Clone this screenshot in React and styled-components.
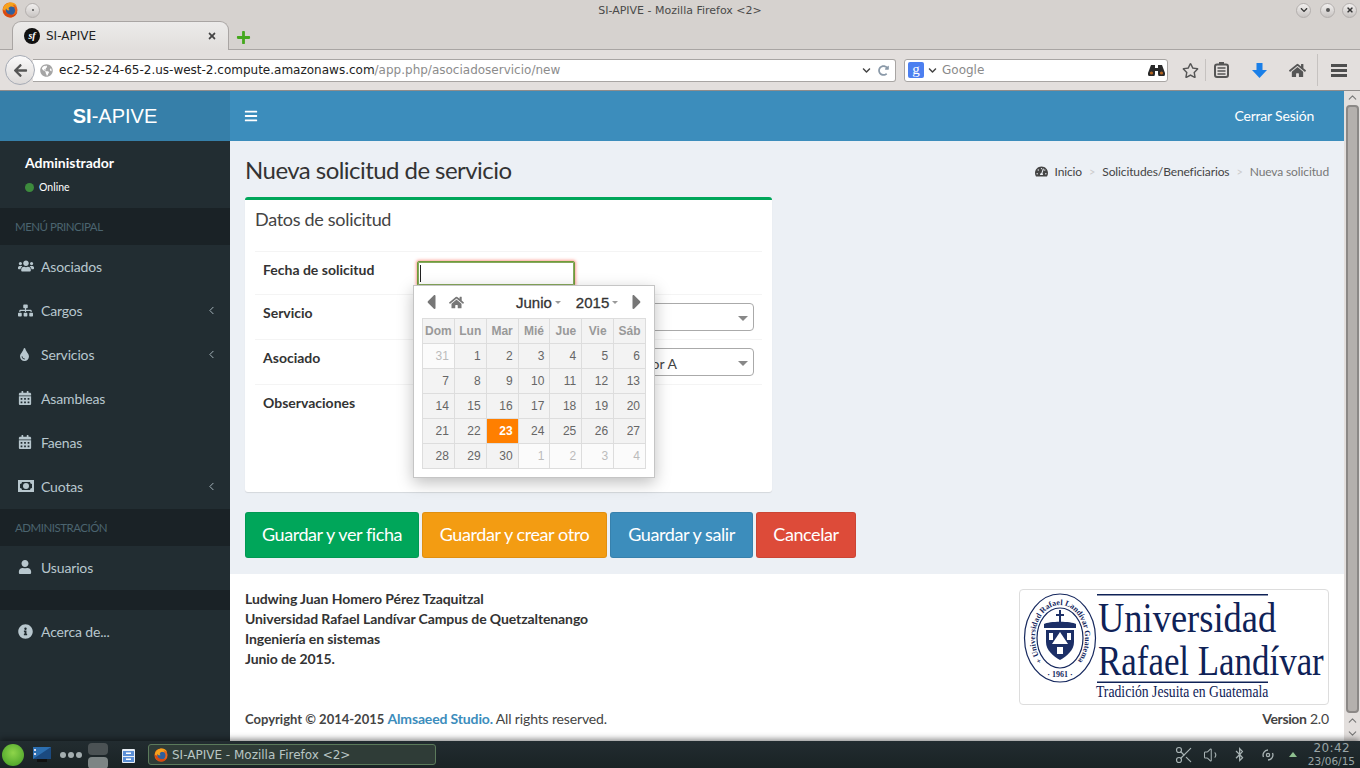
import React from 'react'
import styled, { createGlobalStyle } from 'styled-components'
import {
  FaUsers, FaSitemap, FaTint, FaCalendarAlt, FaUser, FaInfoCircle,
  FaTachometerAlt, FaBars, FaHome, FaCaretLeft, FaCaretRight,
  FaRegStar, FaArrowLeft, FaChevronDown, FaRedoAlt, FaGlobeAmericas, FaPlus, FaTimes,
  FaBluetoothB,
} from 'react-icons/fa'
import { ChevronLeft, ChevronUp, ChevronDown, Scissors, Volume1 } from 'lucide-react'

const Global = createGlobalStyle`
  html, body { margin: 0; padding: 0; width: 1360px; height: 768px; overflow: hidden; }
  body { font-family: Lato, "Noto Sans", sans-serif; font-size: 14px; color: #333; }
  * { box-sizing: border-box; }
`

const Screen = styled.div`
  width: 1360px;
  height: 768px;
  display: flex;
  flex-direction: column;
  background: #d6d2cf;
`

/* ---------- browser chrome ---------- */
const TitleBar = styled.div`
  height: 20px;
  display: flex;
  align-items: center;
  padding: 0 0 0 2px;
  font-family: "DejaVu Sans", sans-serif;
  font-size: 11px;
  color: #4a4a4a;
`
const TitleText = styled.div`
  flex: 1;
  text-align: center;
  padding-left: 24px;
`
const RoundKnob = styled.div`
  width: 15px;
  height: 15px;
  margin-left: ${({ $ml }) => $ml || 0}px;
  margin-right: ${({ $mr }) => $mr || 0}px;
  border-radius: 50%;
  background: linear-gradient(#f1efee, #c8c4c2);
  border: 1px solid #b3afad;
  display: flex;
  align-items: center;
  justify-content: center;
  color: #333;
  font-size: 8px;
  flex: none;
`
const Dot = styled.span`
  width: ${({ $s }) => $s || 2}px;
  height: ${({ $s }) => $s || 2}px;
  background: #555;
  border-radius: 50%;
`
const TabBar = styled.div`
  height: 30px;
  display: flex;
  align-items: flex-end;
  padding-left: 12px;
  border-bottom: 1px solid #a9a5a3;
`
const Tab = styled.div`
  width: 217px;
  height: 29px;
  margin-bottom: -1px;
  display: flex;
  align-items: center;
  padding: 0 11px 0 11px;
  background: linear-gradient(#ecebea, #e1dedc);
  border: 1px solid #a9a5a3;
  border-bottom: none;
  border-radius: 9px 9px 0 0;
  font-family: "DejaVu Sans", sans-serif;
  font-size: 12px;
  color: #222;
`
const Favicon = styled.span`
  width: 16px;
  height: 16px;
  border-radius: 50%;
  background: #111;
  color: #fff;
  font-family: "Liberation Serif", serif;
  font-style: italic;
  font-weight: 700;
  font-size: 10px;
  line-height: 15px;
  text-align: center;
  margin-right: 6px;
  flex: none;
`
const TabLabel = styled.span`
  flex: 1;
`
const NewTab = styled.div`
  margin: 0 0 4px 7px;
  color: #45a81e;
  font-size: 15px;
  display: flex;
`
const NavBar = styled.div`
  height: 41px;
  background: #e3dfdd;
  border-bottom: 1px solid #8f8c8b;
  display: flex;
  align-items: center;
  padding: 0 0 0 5px;
`
const BackButton = styled.div`
  width: 30px;
  height: 30px;
  border-radius: 50%;
  background: linear-gradient(#fbfafa, #dcd9d8);
  border: 1px solid #a6abb5;
  display: flex;
  align-items: center;
  justify-content: center;
  color: #555;
  font-size: 15px;
  margin-right: -2px;
  position: relative;
  z-index: 1;
  flex: none;
`
const UrlBox = styled.div`
  width: 863px;
  height: 23px;
  background: #fff;
  border: 1px solid #a8a5a3;
  border-left: none;
  border-radius: 0 3px 3px 0;
  display: flex;
  align-items: center;
  padding: 0 3px 0 7px;
  font-family: "DejaVu Sans", sans-serif;
  font-size: 12px;
  color: #222;
`
const UrlText = styled.div`
  flex: 1;
  margin-left: 6px;
  white-space: nowrap;
`
const UrlRest = styled.span`
  color: #8c8c8c;
`
const SearchBox = styled.div`
  width: 264px;
  height: 23px;
  margin-left: 8px;
  background: #fff;
  border: 1px solid #a8a5a3;
  border-radius: 3px;
  display: flex;
  align-items: center;
  padding: 0 2px 0 3px;
  font-family: "DejaVu Sans", sans-serif;
  font-size: 12px;
  color: #8a8a8a;
`
const GoogleBadge = styled.span`
  width: 16px;
  height: 16px;
  border-radius: 2px;
  background: #4c7ff0;
  color: #fff;
  font-family: "Liberation Serif", serif;
  font-size: 15px;
  line-height: 14px;
  text-align: center;
  flex: none;
`
const SearchLabel = styled.span`
  flex: 1;
  margin-left: 5px;
`
const ToolIcons = styled.div`
  display: flex;
  align-items: center;
  color: #555;
  height: 100%;
`
const ToolIcon = styled.div`
  width: ${({ $w }) => $w || 38}px;
  margin-left: ${({ $ml }) => $ml || 0}px;
  display: flex;
  justify-content: center;
  font-size: ${({ $size }) => $size || 16}px;
  color: #555;
`
const ToolSep = styled.div`
  width: 1px;
  height: ${({ $h }) => $h || 22}px;
  margin-left: ${({ $ml }) => $ml || 0}px;
  background: #c6c2c0;
`
const MenuLines = styled.div`
  width: 16px;
  height: 13px;
  border-top: 3px solid #4e4e4e;
  border-bottom: 3px solid #4e4e4e;
  position: relative;
  &:after {
    content: '';
    position: absolute;
    left: 0;
    right: 0;
    top: 2px;
    height: 3px;
    background: #4e4e4e;
  }
`

/* ---------- page ---------- */
const Viewport = styled.div`
  height: 650px;
  display: flex;
  background: #fff;
`
const Sidebar = styled.aside`
  width: 230px;
  background: #222d32;
  display: flex;
  flex-direction: column;
  flex: none;
`
const Brand = styled.div`
  height: 50px;
  background: #367fa9;
  color: #fff;
  font-family: "Liberation Sans", sans-serif;
  font-size: 20px;
  line-height: 50px;
  text-align: center;
  b { font-weight: 700; }
`
const UserPanel = styled.div`
  height: 67px;
  padding: 13px 0 0 25px;
  color: #fff;
`
const UserName = styled.div`
  font-weight: 700;
  font-size: 14px;
  line-height: 18px;
`
const UserStatus = styled.div`
  display: flex;
  align-items: center;
  font-size: 10.5px;
  margin-top: 8px;
  line-height: 14px;
`
const StatusDot = styled.span`
  width: 9px;
  height: 9px;
  border-radius: 50%;
  background: #3d8b3d;
  margin-right: 5px;
`
const MenuHeader = styled.div`
  height: ${({ $h }) => $h || 37}px;
  background: #1a2226;
  color: #4b646f;
  font-size: 11.5px;
  letter-spacing: -0.5px;
  line-height: 37px;
  padding-left: 15px;
`
const MenuItem = styled.div`
  height: 44px;
  display: flex;
  align-items: center;
  padding: 0 12px 2px 18px;
  color: #b8c7ce;
  font-size: 14px;
  letter-spacing: -0.15px;
`
const MenuIcon = styled.span`
  width: 23px;
  display: flex;
  font-size: 15px;
  flex: none;
`
const MenuLabel = styled.span`
  flex: 1;
`
const MenuArrow = styled.span`
  display: flex;
`

const Main = styled.main`
  flex: 1;
  display: flex;
  flex-direction: column;
  min-width: 0;
`
const TopBar = styled.header`
  height: 50px;
  background: #3c8dbc;
  color: #fff;
  display: flex;
  align-items: center;
  justify-content: space-between;
  padding: 0 30px 2px 15px;
  font-size: 14px;
  letter-spacing: -0.2px;
  flex: none;
`
const Burger = styled.span`
  display: flex;
  font-size: 14px;
  margin-left: -1px;
  margin-top: 2px;
`
const Content = styled.section`
  height: 433px;
  background: #ecf0f5;
  padding: 14px 15px 0;
  flex: none;
`
const ContentHead = styled.div`
  display: flex;
  align-items: center;
  justify-content: space-between;
  height: 28px;
  margin-bottom: 14px;
`
const PageTitle = styled.h1`
  margin: 0;
  font-size: 24px;
  font-weight: 400;
  letter-spacing: -0.55px;
  color: #333;
`
const Breadcrumb = styled.div`
  display: flex;
  align-items: center;
  font-size: 12px;
  letter-spacing: -0.12px;
  color: #444;
  padding-top: 4px;
`
const CrumbSep = styled.span`
  color: #ccc;
  margin: 0 7px;
  font-size: 11px;
`
const CrumbIcon = styled.span`
  display: flex;
  margin-right: 6px;
  font-size: 13px;
`
const CrumbCurrent = styled.span`
  color: #777;
`
const Card = styled.div`
  width: 527px;
  height: 295px;
  background: #fff;
  border-top: 3px solid #00a65a;
  border-radius: 3px;
  box-shadow: 0 1px 1px rgba(0, 0, 0, 0.1);
  padding: 0 10px;
`
const CardTitle = styled.h3`
  margin: 0;
  height: 51px;
  font-size: 18px;
  font-weight: 400;
  letter-spacing: -0.3px;
  color: #444;
  line-height: 38px;
`
const FormRow = styled.div`
  height: ${({ $h }) => $h}px;
  border-top: 1px solid #f4f4f4;
  display: flex;
  padding-top: 8px;
  position: relative;
`
const FormLabel = styled.label`
  width: 162px;
  padding-left: 8px;
  font-weight: 700;
  font-size: 14px;
  line-height: 20px;
  color: #333;
  flex: none;
`
const DateInput = styled.div`
  width: 158px;
  height: 25px;
  background: #fff;
  border: 1px solid #6f9c3b;
  border-radius: 2px;
  box-shadow: 0 0 3px 1px rgba(255, 70, 50, 0.5), inset 0 0 0 1px #86a85c;
  padding: 3px 2px;
  margin-top: 1px;
`
const Caret = styled.div`
  width: 1px;
  height: 17px;
  background: #222;
`
const FakeSelect = styled.div`
  width: 337px;
  height: 28px;
  border: 1px solid #aaa;
  border-radius: 4px;
  background: #fff;
  display: flex;
  align-items: center;
  justify-content: space-between;
  padding: 2px 5px 0 207px;
  font-size: 14px;
  color: #444;
`
const SelectArrow = styled.span`
  width: 0;
  height: 0;
  border-left: 5px solid transparent;
  border-right: 5px solid transparent;
  border-top: 5px solid #888;
`

/* calendar popup, sits over the form */
const Popup = styled.div`
  position: absolute;
  left: 158px;
  top: 33px;
  width: 242px;
  height: 193px;
  background: #fff;
  border: 1px solid #c5c5c5;
  box-shadow: 0 5px 15px rgba(0, 0, 0, 0.25);
  padding: 0 8px;
  z-index: 2;
  font-family: "Liberation Sans", sans-serif;
`
const PopupHead = styled.div`
  height: 32px;
  display: flex;
  align-items: center;
  color: #777;
`
const HeadIcon = styled.span`
  display: flex;
  font-size: ${({ $size }) => $size || 18}px;
  margin-left: ${({ $ml }) => $ml || 0}px;
`
const HeadPick = styled.span`
  font-size: 15px;
  color: #333;
  -webkit-text-stroke: 0.3px #333;
  margin-left: ${({ $ml }) => $ml}px;
  display: flex;
  align-items: center;
  &:after {
    content: '';
    margin-left: 3px;
    border-left: 3px solid transparent;
    border-right: 3px solid transparent;
    border-top: 3px solid #999;
  }
`
const CalGrid = styled.div`
  display: grid;
  grid-template-columns: repeat(7, 1fr);
  grid-auto-rows: 25px;
  width: 224px;
  border-top: 1px solid #ddd;
  border-left: 1px solid #ddd;
`
const CalCell = styled.div`
  border-right: 1px solid #ddd;
  border-bottom: 1px solid #ddd;
  font-size: 12px;
  line-height: 24px;
  text-align: ${({ $head }) => ($head ? 'center' : 'right')};
  padding: ${({ $head }) => ($head ? '0' : '0 5px')};
  background: ${({ $today, $muted }) => ($today ? '#ff7f00' : $muted ? '#fbfbfb' : '#f3f3f3')};
  color: ${({ $today, $muted, $head }) => ($today ? '#fff' : $head ? '#999' : $muted ? '#bbb' : '#666')};
  font-weight: ${({ $today, $head }) => ($today || $head ? 700 : 400)};
`

const ButtonRow = styled.div`
  display: flex;
  gap: 3px;
  margin-top: 20px;
`
const ActionButton = styled.button`
  height: 46px;
  width: ${({ $w }) => $w}px;
  background: ${({ $bg }) => $bg};
  border: 1px solid rgba(0, 0, 0, 0.08);
  border-radius: 3px;
  color: #fff;
  font-family: Lato, "Noto Sans", sans-serif;
  font-size: 18px;
  letter-spacing: -0.42px;
  padding: 0 0 2px;
`

const Footer = styled.footer`
  flex: 1;
  background: #fff;
  padding: 15px 15px 0;
  color: #444;
`
const FooterTop = styled.div`
  display: flex;
  justify-content: space-between;
  height: 116px;
`
const Signature = styled.div`
  font-weight: 700;
  font-size: 14px;
  letter-spacing: -0.1px;
  line-height: 20px;
  color: #333;
`
const LogoBox = styled.div`
  width: 310px;
  height: 116px;
  border: 1px solid #ddd;
  border-radius: 4px;
  background: #fff;
`
const FooterBottom = styled.div`
  display: flex;
  justify-content: space-between;
  margin-top: 4px;
  line-height: 20px;
  font-size: 14px;
  letter-spacing: -0.15px;
`
const CopyYears = styled.b`
  font-size: 13px;
  letter-spacing: 0;
`
const FooterLink = styled.b`
  color: #3c8dbc;
`
const VersionTag = styled.b`
  letter-spacing: -0.4px;
`

const Scrollbar = styled.div`
  width: 16px;
  background: #e3dfdd;
  display: flex;
  flex-direction: column;
  align-items: center;
  color: #777;
  flex: none;
`
const ScrollArrow = styled.div`
  height: ${({ $h }) => $h || 13}px;
  display: flex;
  align-items: center;
`
const ScrollThumb = styled.div`
  width: 13px;
  height: 608px;
  border: 2px solid #8b8886;
  border-radius: 4px;
  background: #b4b0ad;
  margin-top: 1px;
`

/* ---------- desktop panel ---------- */
const Taskbar = styled.div`
  height: 27px;
  background: linear-gradient(#222c30, #1a2325);
  box-shadow: 0 -2px 6px rgba(0, 0, 0, 0.45);
  position: relative;
  display: flex;
  align-items: center;
  padding-left: 2px;
  font-family: "DejaVu Sans", sans-serif;
  overflow: hidden;
`
const GreenBall = styled.div`
  width: 22px;
  height: 22px;
  border-radius: 50%;
  background: radial-gradient(circle at 50% 40%, #8ed54a, #3f9a24);
  flex: none;
`
const PagerDots = styled.div`
  display: flex;
  gap: 2px;
  margin-left: 9px;
`
const PagerDot = styled.span`
  width: 6px;
  height: 6px;
  border-radius: 50%;
  background: #a4aeb0;
`
const Pager = styled.div`
  display: flex;
  flex-direction: column;
  gap: 2px;
  margin: 3px 0 0 6px;
`
const PagerCell = styled.div`
  width: 20px;
  height: 12px;
  border-radius: 4px;
  background: ${({ $on }) => ($on ? '#7d8585' : '#4b5254')};
`
const TaskButton = styled.div`
  width: 288px;
  height: 21px;
  margin-left: 13px;
  border: 1px solid #5b7a5b;
  border-radius: 3px;
  background: #2f3c37;
  display: flex;
  align-items: center;
  padding-left: 5px;
  gap: 4px;
  color: #b9c6c4;
  font-size: 12px;
`
const Tray = styled.div`
  margin-left: auto;
  display: flex;
  align-items: center;
  color: #a7b2b3;
  padding-right: 5px;
`
const TrayIcon = styled.span`
  display: flex;
  width: ${({ $w }) => $w || 28}px;
  justify-content: center;
  font-size: 15px;
`
const Clock = styled.div`
  margin-left: 4px;
  text-align: right;
  color: #9aa5a6;
`
const ClockTime = styled.div`
  font-size: 12px;
  line-height: 13px;
  letter-spacing: 0.4px;
  padding-right: 5px;
`
const ClockDate = styled.div`
  font-size: 10.5px;
  line-height: 13px;
`
const Tri = styled.span`
  width: 0;
  height: 0;
  border-left: 4px solid transparent;
  border-right: 4px solid transparent;
  border-bottom: 5px solid #8fc08f;
`

const FirefoxIcon = ({ size = 16 }) => (
  <svg width={size} height={size} viewBox="0 0 16 16">
    <circle cx="8" cy="8" r="7.5" fill="#e8641b" />
    <circle cx="8.5" cy="8.5" r="4.6" fill="#2f5f9e" />
    <path d="M1 7C2 3 5 .6 9 .6c3 0 5 1.6 6 4-1.500-1.500-3-2-4.500-1.800 1 .6 1.400 1.400 1.400 2.200-1.600-1-4-.8-5 .6-.6.9-.2 2 .8 2.400C6 9 4.500 8 4.200 6.500 3.400 7 3 8 3 9 2 8.500 1.300 8 1 7z" fill="#f6a21c" />
    <path d="M1 8c.3 4 3.300 7.400 7.300 7.400 3.400 0 6.200-2.400 7-5.500-1.300 2.300-3.700 3.300-6.100 2.900C6 12.300 3.500 10.500 3 8.500 2 8.700 1.400 8.500 1 8z" fill="#d8480f" />
  </svg>
)

const MonitorIcon = () => (
  <svg width="18" height="17" viewBox="0 0 18 17" style={{ marginLeft: 9 }}>
    <rect x="0" y="1" width="18" height="12" fill="#2c6fb0" />
    <path d="M0 13L18 1v12z" fill="#1b4a80" />
    <rect x="1" y="3" width="2" height="2" fill="#dde" />
    <rect x="1" y="7" width="2" height="2" fill="#dde" />
    <rect x="4" y="13" width="10" height="3" fill="#111" />
  </svg>
)

const CabinetIcon = () => (
  <svg width="13" height="16" viewBox="0 0 13 16" style={{ marginLeft: 14 }}>
    <rect x="0" y="2" width="13" height="14" rx="1" fill="#e8eef5" />
    <rect x="1" y="4" width="11" height="5" fill="#5b8fd6" />
    <rect x="1" y="10" width="11" height="5" fill="#5b8fd6" />
    <rect x="4" y="5.500" width="5" height="1.500" fill="#fff" />
    <rect x="4" y="11.500" width="5" height="1.500" fill="#fff" />
  </svg>
)

const Binoculars = () => (
  <svg width="17" height="12" viewBox="0 0 17 12">
    <path d="M3 1h4v3h3V1h4l3 8a3 3 0 0 1-7 1V7H7v3a3 3 0 0 1-7-1z" fill="#2a2a2a" />
    <circle cx="3.500" cy="9" r="1.600" fill="#b5641f" />
    <circle cx="13.500" cy="9" r="1.600" fill="#b5641f" />
  </svg>
)

const ClipboardIcon = () => (
  <svg width="15" height="16" viewBox="0 0 15 16">
    <rect x="1" y="2.500" width="13" height="12.500" rx="2" fill="none" stroke="#555" strokeWidth="2" />
    <rect x="5" y="0" width="5" height="3" fill="#555" />
    <path d="M3.500 6h8M3.500 9h8M3.500 12h8" stroke="#555" strokeWidth="1.500" />
  </svg>
)

const DownloadArrow = () => (
  <svg width="15" height="15" viewBox="0 0 15 15">
    <path d="M4.500 0h6v7H15l-7.500 8L0 7h4.500z" fill="#1a7fe8" />
  </svg>
)

const NetworkIcon = () => (
  <svg width="14" height="14" viewBox="0 0 14 14" fill="none" stroke="#a7b2b3" strokeWidth="1.300">
    <circle cx="7" cy="7" r="1.600" />
    <path d="M2.500 9A5 5 0 0 1 7 2M11.500 5A5 5 0 0 1 7 12" />
  </svg>
)

const BillIcon = () => (
  <svg width="16" height="12" viewBox="0 0 16 12">
    <path fillRule="evenodd" fill="#b8c7ce" d="M0 0h16v12H0zM2 2v8h12V2z" />
    <circle cx="8" cy="6" r="3" fill="#b8c7ce" />
    <path d="M2 2h2a2 2 0 0 1-2 2zM14 2v2a2 2 0 0 1-2-2zM2 10V8a2 2 0 0 1 2 2zM14 10h-2a2 2 0 0 1 2-2z" fill="#b8c7ce" />
  </svg>
)

/* university logo: seal drawing, name stays real text */
const UniversityLogo = () => (
  <svg width="308" height="114" viewBox="0 0 308 114">
    <g fill="none" stroke="#16285e">
      <ellipse cx="40" cy="48" rx="35.500" ry="44" strokeWidth="1.200" />
      <ellipse cx="40" cy="48" rx="23" ry="30" strokeWidth="1.200" />
    </g>
    <path id="sealTop" d="M 22.300 71.300 A 25 33 0 1 1 57.700 71.300" fill="none" />
    <text fontFamily="'Liberation Serif', serif" fontSize="8" fontWeight="700" fill="#16285e">
      <textPath href="#sealTop">+ Universidad Rafael Landívar Guatemala</textPath>
    </text>
    <text x="40" y="87" textAnchor="middle" fontFamily="'Liberation Serif', serif" fontSize="8" fontWeight="700" fill="#16285e">· 1961 ·</text>
    <g fill="#1c2f66">
      <path d="M39 20h2v4h3v2h-3v6h-2v-6h-3v-2h3z" />
      <path d="M24 34c5-3 27-3 32 0v4H24z" />
      <path d="M26 40h28v12c0 8-7 14-14 18-7-4-14-10-14-18z" />
    </g>
    <g fill="#fff">
      <path d="M40 42l8 12H32z" />
      <rect x="29" y="43" width="4" height="7" />
      <rect x="47" y="43" width="4" height="7" />
      <rect x="37" y="57" width="6" height="7" />
    </g>
    <g fill="#0f2257" fontFamily="'Liberation Serif', serif">
      <rect x="77" y="4" width="171" height="1.500" />
      <text transform="translate(78 42) scale(0.868 1)" fontSize="42">Universidad</text>
      <text transform="translate(78 85) scale(0.831 1)" fontSize="42">Rafael Landívar</text>
      <rect x="77" y="91.500" width="171" height="1.500" />
      <text transform="translate(76 107) scale(0.856 1)" fontSize="16">Tradición Jesuita en Guatemala</text>
    </g>
  </svg>
)

const menuTop = [
  { label: 'Asociados', icon: <FaUsers size={16} /> },
  { label: 'Cargos', icon: <FaSitemap />, arrow: true },
  { label: 'Servicios', icon: <FaTint size={13} />, arrow: true },
  { label: 'Asambleas', icon: <FaCalendarAlt size={14} /> },
  { label: 'Faenas', icon: <FaCalendarAlt size={14} /> },
  { label: 'Cuotas', icon: <BillIcon />, arrow: true },
]

const Item = ({ label, icon, arrow }) => (
  <MenuItem>
    <MenuIcon>{icon}</MenuIcon>
    <MenuLabel>{label}</MenuLabel>
    {arrow && <MenuArrow><ChevronLeft size={13} strokeWidth={1.6} /></MenuArrow>}
  </MenuItem>
)

const dayNames = ['Dom', 'Lun', 'Mar', 'Mié', 'Jue', 'Vie', 'Sáb']
const days = [
  [31, 1], [1], [2], [3], [4], [5], [6],
  [7], [8], [9], [10], [11], [12], [13],
  [14], [15], [16], [17], [18], [19], [20],
  [21], [22], [23], [24], [25], [26], [27],
  [28], [29], [30], [1, 1], [2, 1], [3, 1], [4, 1],
]

const Calendar = () => (
  <Popup>
    <PopupHead>
      <HeadIcon $size={24} $ml={-3}><FaCaretLeft /></HeadIcon>
      <HeadIcon $size={15} $ml={6}><FaHome /></HeadIcon>
      <HeadPick $ml={52}>Junio</HeadPick>
      <HeadPick $ml={15}>2015</HeadPick>
      <HeadIcon $size={24} $ml={7}><FaCaretRight /></HeadIcon>
    </PopupHead>
    <CalGrid>
      {dayNames.map((d) => <CalCell key={d} $head>{d}</CalCell>)}
      {days.map(([n, muted], i) => (
        <CalCell key={i} $muted={!!muted} $today={n === 23}>{n}</CalCell>
      ))}
    </CalGrid>
  </Popup>
)

export default function App() {
  return (
    <Screen>
      <Global />
      <TitleBar>
        <FirefoxIcon />
        <RoundKnob $ml={7}><Dot /></RoundKnob>
        <TitleText>SI-APIVE - Mozilla Firefox &lt;2&gt;</TitleText>
        <RoundKnob><FaChevronDown /></RoundKnob>
        <RoundKnob $ml={9}><Dot $s={4} /></RoundKnob>
        <RoundKnob $ml={7} $mr={3}><FaTimes /></RoundKnob>
      </TitleBar>
      <TabBar>
        <Tab>
          <Favicon>sf</Favicon>
          <TabLabel>SI-APIVE</TabLabel>
          <FaTimes size={10} color="#444" />
        </Tab>
        <NewTab><FaPlus /></NewTab>
      </TabBar>
      <NavBar>
        <BackButton><FaArrowLeft /></BackButton>
        <UrlBox>
          <FaGlobeAmericas size={13} color="#a5a5a5" />
          <UrlText>
            ec2-52-24-65-2.us-west-2.compute.amazonaws.com<UrlRest>/app.php/asociadoservicio/new</UrlRest>
          </UrlText>
          <FaChevronDown size={9} color="#444" />
          <FaRedoAlt size={11} color="#8a99a8" style={{ margin: '0 3px 0 7px' }} />
        </UrlBox>
        <SearchBox>
          <GoogleBadge>g</GoogleBadge>
          <FaChevronDown size={9} color="#444" style={{ marginLeft: 4 }} />
          <SearchLabel>Google</SearchLabel>
          <Binoculars />
        </SearchBox>
        <ToolIcons>
          <ToolIcon $w={30} $ml={7} $size={17}><FaRegStar /></ToolIcon>
          <ToolSep />
          <ToolIcon $w={30}><ClipboardIcon /></ToolIcon>
          <ToolIcon $w={46}><DownloadArrow /></ToolIcon>
          <ToolIcon $w={30} $size={17}><FaHome /></ToolIcon>
          <ToolSep $h={32} $ml={5} />
          <ToolIcon $w={42}><MenuLines /></ToolIcon>
        </ToolIcons>
      </NavBar>

      <Viewport>
        <Sidebar>
          <Brand><b>SI</b>-APIVE</Brand>
          <UserPanel>
            <UserName>Administrador</UserName>
            <UserStatus><StatusDot />Online</UserStatus>
          </UserPanel>
          <MenuHeader>MENÚ PRINCIPAL</MenuHeader>
          {menuTop.map((m) => <Item key={m.label} {...m} />)}
          <MenuHeader>ADMINISTRACIÓN</MenuHeader>
          <Item label="Usuarios" icon={<FaUser size={14} />} />
          <MenuHeader $h={20} />
          <Item label="Acerca de..." icon={<FaInfoCircle />} />
        </Sidebar>

        <Main>
          <TopBar>
            <Burger><FaBars /></Burger>
            <span>Cerrar Sesión</span>
          </TopBar>
          <Content>
            <ContentHead>
              <PageTitle>Nueva solicitud de servicio</PageTitle>
              <Breadcrumb>
                <CrumbIcon><FaTachometerAlt /></CrumbIcon>
                Inicio
                <CrumbSep>&gt;</CrumbSep>
                Solicitudes/Beneficiarios
                <CrumbSep>&gt;</CrumbSep>
                <CrumbCurrent>Nueva solicitud</CrumbCurrent>
              </Breadcrumb>
            </ContentHead>
            <Card>
              <CardTitle>Datos de solicitud</CardTitle>
              <FormRow $h={43}>
                <FormLabel>Fecha de solicitud</FormLabel>
                <DateInput><Caret /></DateInput>
                <Calendar />
              </FormRow>
              <FormRow $h={45}>
                <FormLabel>Servicio</FormLabel>
                <FakeSelect><span /><SelectArrow /></FakeSelect>
              </FormRow>
              <FormRow $h={45}>
                <FormLabel>Asociado</FormLabel>
                <FakeSelect><span>Sector A</span><SelectArrow /></FakeSelect>
              </FormRow>
              <FormRow $h={80}>
                <FormLabel>Observaciones</FormLabel>
              </FormRow>
            </Card>
            <ButtonRow>
              <ActionButton $w={174} $bg="#00a65a">Guardar y ver ficha</ActionButton>
              <ActionButton $w={185} $bg="#f39c12">Guardar y crear otro</ActionButton>
              <ActionButton $w={143} $bg="#3c8dbc">Guardar y salir</ActionButton>
              <ActionButton $w={100} $bg="#dd4b39">Cancelar</ActionButton>
            </ButtonRow>
          </Content>
          <Footer>
            <FooterTop>
              <Signature>
                <div>Ludwing Juan Homero Pérez Tzaquitzal</div>
                <div>Universidad Rafael Landívar Campus de Quetzaltenango</div>
                <div>Ingeniería en sistemas</div>
                <div>Junio de 2015.</div>
              </Signature>
              <LogoBox><UniversityLogo /></LogoBox>
            </FooterTop>
            <FooterBottom>
              <span><CopyYears>Copyright © 2014-2015 </CopyYears><FooterLink>Almsaeed Studio.</FooterLink> All rights reserved.</span>
              <span><VersionTag>Version</VersionTag> 2.0</span>
            </FooterBottom>
          </Footer>
        </Main>

        <Scrollbar>
          <ScrollArrow><ChevronUp size={13} /></ScrollArrow>
          <ScrollThumb />
          <ScrollArrow $h={14}><ChevronUp size={13} /></ScrollArrow>
          <ScrollArrow $h={12}><ChevronDown size={13} /></ScrollArrow>
        </Scrollbar>
      </Viewport>

      <Taskbar>
        <GreenBall />
        <MonitorIcon />
        <PagerDots><PagerDot /><PagerDot /><PagerDot /></PagerDots>
        <Pager><PagerCell /><PagerCell $on /></Pager>
        <CabinetIcon />
        <TaskButton><FirefoxIcon size={14} />SI-APIVE - Mozilla Firefox &lt;2&gt;</TaskButton>
        <Tray>
          <TrayIcon><Scissors size={20} strokeWidth={1.4} /></TrayIcon>
          <TrayIcon><Volume1 size={18} strokeWidth={1.4} /></TrayIcon>
          <TrayIcon><FaBluetoothB /></TrayIcon>
          <TrayIcon><NetworkIcon /></TrayIcon>
          <TrayIcon $w={22}><Tri /></TrayIcon>
          <Clock>
            <ClockTime>20:42</ClockTime>
            <ClockDate>23/06/15</ClockDate>
          </Clock>
        </Tray>
      </Taskbar>
    </Screen>
  )
}
